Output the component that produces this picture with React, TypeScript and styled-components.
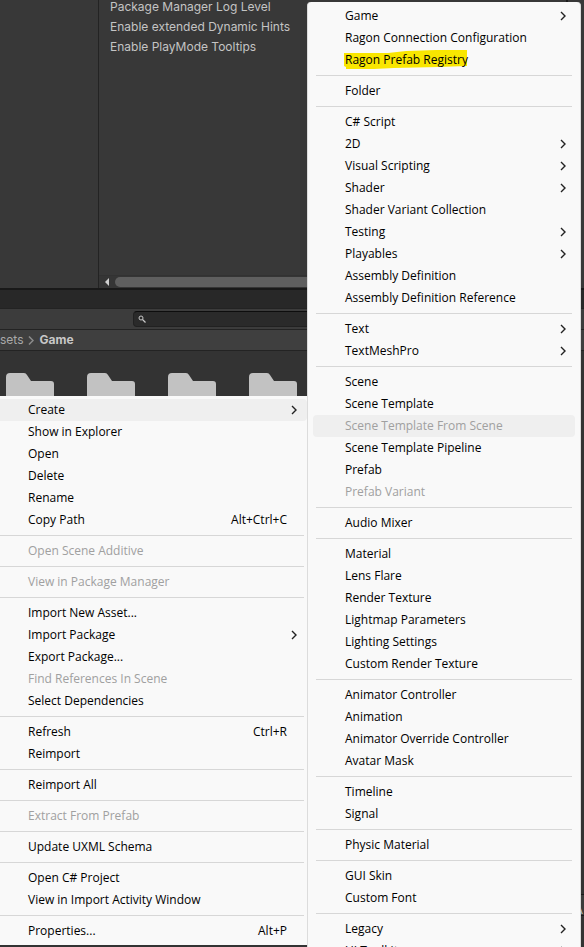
import React from "react";
import styled, { createGlobalStyle } from "styled-components";

const Global = createGlobalStyle`
  * { box-sizing: border-box; }
  html, body, #root { margin: 0; height: 100%; }
  body { background: #333; overflow: hidden; }
`;

const Editor = styled.div`
  position: relative;
  height: 100%;
  overflow: hidden;
  display: flex;
  flex-direction: column;
  background: #333;
  color: #c4c4c4;
  font: 12px/18px Inter, sans-serif;
`;

const Preferences = styled.section`
  display: grid;
  grid-template-columns: 98px 270px 200px 1fr;
  height: 288px;
  flex: none;
  background: #383838;
`;

const Pane = styled.div`
  display: flex;
  flex-direction: column;
  justify-content: space-between;
  border-left: 1px solid #232323;
`;

const SidePane = styled.div`
  border-right: 2px solid #1c1c1c;
`;

const Settings = styled.ul`
  display: flex;
  flex-direction: column;
  gap: 6px;
  list-style: none;
  margin: 0;
  padding: 0 0 0 11px;
  line-height: 14px;
`;

const ScrollBar = styled.div`
  display: flex;
  align-items: center;
  gap: 6px;
  height: 13px;
  padding-left: 6px;
  border-top: 1px solid #323232;
  background: #353535;
`;

const Thumb = styled.div`
  flex: 1;
  height: 10px;
  border-radius: 5px;
  background: #5f5f5f;
`;

const TabStrip = styled.div`
  height: 21px;
  flex: none;
  border-top: 2px solid #191919;
  border-bottom: 1px solid #232323;
  background: #282828;
`;

const Toolbar = styled.div`
  height: 21px;
  flex: none;
  display: flex;
  align-items: center;
  padding: 0 8px 0 133px;
  background: #3c3c3c;
  border-bottom: 1px solid #232323;
`;

const SearchBox = styled.label`
  flex: 1;
  display: flex;
  align-items: center;
  height: 16px;
  padding-left: 4px;
  gap: 4px;
  border: 1px solid #212121;
  border-top-color: #0d0d0d;
  border-radius: 4px;
  background: #2a2a2a;
`;

const SearchInput = styled.input`
  flex: 1;
  min-width: 0;
  height: 12px;
  border: 0;
  padding: 0;
  outline: 0;
  background: transparent;
  color: #c4c4c4;
`;

const Breadcrumbs = styled.nav`
  display: flex;
  align-items: center;
  flex: none;
  height: 21px;
  gap: 5px;
  background: #3f3f3f;
  border-bottom: 1px solid #232323;
`;

const Crumb = styled.a<{ $current?: boolean }>`
  color: ${(p) => (p.$current ? "#c8c8c8" : "#a9a9a9")};
  font-weight: ${(p) => (p.$current ? 700 : 400)};
  text-decoration: none;
`;

const Folders = styled.div`
  display: flex;
  gap: 33px;
  padding: 22px 0 0 6px;
`;

const StatusBar = styled.footer`
  display: flex;
  justify-content: flex-end;
  flex: none;
  height: 22px;
  margin: auto 0 31px;
  padding: 6px 1px 0 0;
  border: 1px solid #191919;
  border-width: 1px 0;
  background: #3c3c3c;
`;

const MenuBox = styled.div`
  position: absolute;
  background: #f9f9f9;
  font: 12px/22px "Segoe UI", "Open Sans", sans-serif;
  color: #000;
`;

const AssetMenu = styled(MenuBox)`
  left: 0;
  top: 396px;
  width: 307px;
  padding: 3px 0;
`;

const CreateMenu = styled(MenuBox)`
  left: 307px;
  top: 2px;
  width: 274px;
  padding: 3px 5px;
  border: 1px solid #dcdcdc;
  border-width: 0 1px;
  border-radius: 4px;
`;

const Item = styled.button<{ $hover?: boolean; $sub?: boolean }>`
  display: flex;
  justify-content: space-between;
  align-items: center;
  width: 100%;
  height: 22px;
  border: 0;
  border-radius: ${(p) => (p.$sub ? "4px" : "0 4px 4px 0")};
  padding: ${(p) => (p.$sub ? "0 9px 0 32px" : "0 10px 0 28px")};
  background: ${(p) => (p.$hover ? "#efefef" : "transparent")};
  color: inherit;
  font: inherit;
  text-align: left;
  white-space: nowrap;
  &:disabled { color: #a0a0a0; }
`;

const Label = styled.span`
  position: relative;
  isolation: isolate;
`;

const Shortcut = styled(Label)`
  margin-right: 10px;
`;

const Separator = styled.hr<{ $sub?: boolean }>`
  height: 1px;
  border: 0;
  margin: ${(p) => (p.$sub ? "4px 3px" : "4px 3px 4px 0")};
  background: #d7d7d7;
`;

const Stroke = styled.svg`
  position: absolute;
  left: -1px;
  top: 0;
  z-index: -1;
`;

type Entry = { label: string; sub?: boolean; keys?: string; off?: boolean; hover?: boolean; mark?: boolean } | null;

const assetEntries: Entry[] = [
  { label: "Create", sub: true, hover: true },
  { label: "Show in Explorer" },
  { label: "Open" },
  { label: "Delete" },
  { label: "Rename" },
  { label: "Copy Path", keys: "Alt+Ctrl+C" },
  null,
  { label: "Open Scene Additive", off: true },
  null,
  { label: "View in Package Manager", off: true },
  null,
  { label: "Import New Asset..." },
  { label: "Import Package", sub: true },
  { label: "Export Package..." },
  { label: "Find References In Scene", off: true },
  { label: "Select Dependencies" },
  null,
  { label: "Refresh", keys: "Ctrl+R" },
  { label: "Reimport" },
  null,
  { label: "Reimport All" },
  null,
  { label: "Extract From Prefab", off: true },
  null,
  { label: "Update UXML Schema" },
  null,
  { label: "Open C# Project" },
  { label: "View in Import Activity Window" },
  null,
  { label: "Properties...", keys: "Alt+P" },
];

const createEntries: Entry[] = [
  { label: "Game", sub: true },
  { label: "Ragon Connection Configuration" },
  { label: "Ragon Prefab Registry", mark: true },
  null,
  { label: "Folder" },
  null,
  { label: "C# Script" },
  { label: "2D", sub: true },
  { label: "Visual Scripting", sub: true },
  { label: "Shader", sub: true },
  { label: "Shader Variant Collection" },
  { label: "Testing", sub: true },
  { label: "Playables", sub: true },
  { label: "Assembly Definition" },
  { label: "Assembly Definition Reference" },
  null,
  { label: "Text", sub: true },
  { label: "TextMeshPro", sub: true },
  null,
  { label: "Scene" },
  { label: "Scene Template" },
  { label: "Scene Template From Scene", off: true, hover: true },
  { label: "Scene Template Pipeline" },
  { label: "Prefab" },
  { label: "Prefab Variant", off: true },
  null,
  { label: "Audio Mixer" },
  null,
  { label: "Material" },
  { label: "Lens Flare" },
  { label: "Render Texture" },
  { label: "Lightmap Parameters" },
  { label: "Lighting Settings" },
  { label: "Custom Render Texture" },
  null,
  { label: "Animator Controller" },
  { label: "Animation" },
  { label: "Animator Override Controller" },
  { label: "Avatar Mask" },
  null,
  { label: "Timeline" },
  { label: "Signal" },
  null,
  { label: "Physic Material" },
  null,
  { label: "GUI Skin" },
  { label: "Custom Font" },
  null,
  { label: "Legacy", sub: true },
  { label: "UI Toolkit", sub: true },
];

const Chevron = () => (
  <svg width="6" height="10" viewBox="0 0 6 10" fill="none" stroke="#222" strokeWidth="1.4" aria-hidden="true">
    <path d="M1 1l4 4-4 4" />
  </svg>
);

const Highlight = () => (
  <Stroke width="124" height="22" viewBox="0 0 124 22" aria-hidden="true">
    <path d="M0 4L44 4 62 2 92 1 123 1 123 17 94 18 50 19 30 20 2 20 2 18 0 17Z" fill="#f9e600" />
  </Stroke>
);

const Folder = () => (
  <svg width="48" height="40" viewBox="0 0 48 40" fill="#c2c2c2" aria-hidden="true">
    <path d="M0 4Q0 0 4 0H18Q20 0 21 2L25 8H45Q48 8 48 11V40H0Z" />
  </svg>
);

function MenuList({ entries, nested }: { entries: Entry[]; nested?: boolean }) {
  return (
    <>
      {entries.map((e, i) =>
        e ? (
          <Item key={i} role="menuitem" disabled={e.off} $hover={e.hover} $sub={nested}>
            <Label>
              {e.mark && <Highlight />}
              {e.label}
            </Label>
            {e.keys && <Shortcut>{e.keys}</Shortcut>}
            {e.sub && <Chevron />}
          </Item>
        ) : (
          <Separator key={i} $sub={nested} />
        )
      )}
    </>
  );
}

export default function App() {
  return (
    <Editor>
      <Global />
      <Preferences>
        <div />
        <Pane>
          <Settings>
            <li>Package Manager Log Level</li>
            <li>Enable extended Dynamic Hints</li>
            <li>Enable PlayMode Tooltips</li>
          </Settings>
          <ScrollBar>
            <svg width="4" height="8" viewBox="0 0 4 8" fill="#d0d0d0" aria-hidden="true">
              <path d="M4 0v8L0 4z" />
            </svg>
            <Thumb />
          </ScrollBar>
        </Pane>
        <SidePane />
      </Preferences>
      <TabStrip />
      <Toolbar>
        <SearchBox>
          <svg width="8" height="8" viewBox="0 0 8 8" fill="none" stroke="#c8c8c8" aria-hidden="true">
            <circle cx="3" cy="3" r="2" />
            <path d="M4.5 4.5l3 3" strokeWidth="1.3" />
          </svg>
          <SearchInput aria-label="Search assets" />
        </SearchBox>
      </Toolbar>
      <Breadcrumbs>
        <Crumb href="#assets">sets</Crumb>
        <svg width="6" height="9" viewBox="0 0 6 9" fill="none" stroke="#8c8c8c" strokeWidth="1.5" aria-hidden="true">
          <path d="M1 .5l4 4-4 4" />
        </svg>
        <Crumb href="#game" $current>Game</Crumb>
      </Breadcrumbs>
      <Folders>
        <Folder />
        <Folder />
        <Folder />
        <Folder />
      </Folders>
      <StatusBar>A</StatusBar>
      <AssetMenu role="menu" aria-label="Assets">
        <MenuList entries={assetEntries} />
      </AssetMenu>
      <CreateMenu role="menu" aria-label="Create">
        <MenuList entries={createEntries} nested />
      </CreateMenu>
    </Editor>
  );
}
